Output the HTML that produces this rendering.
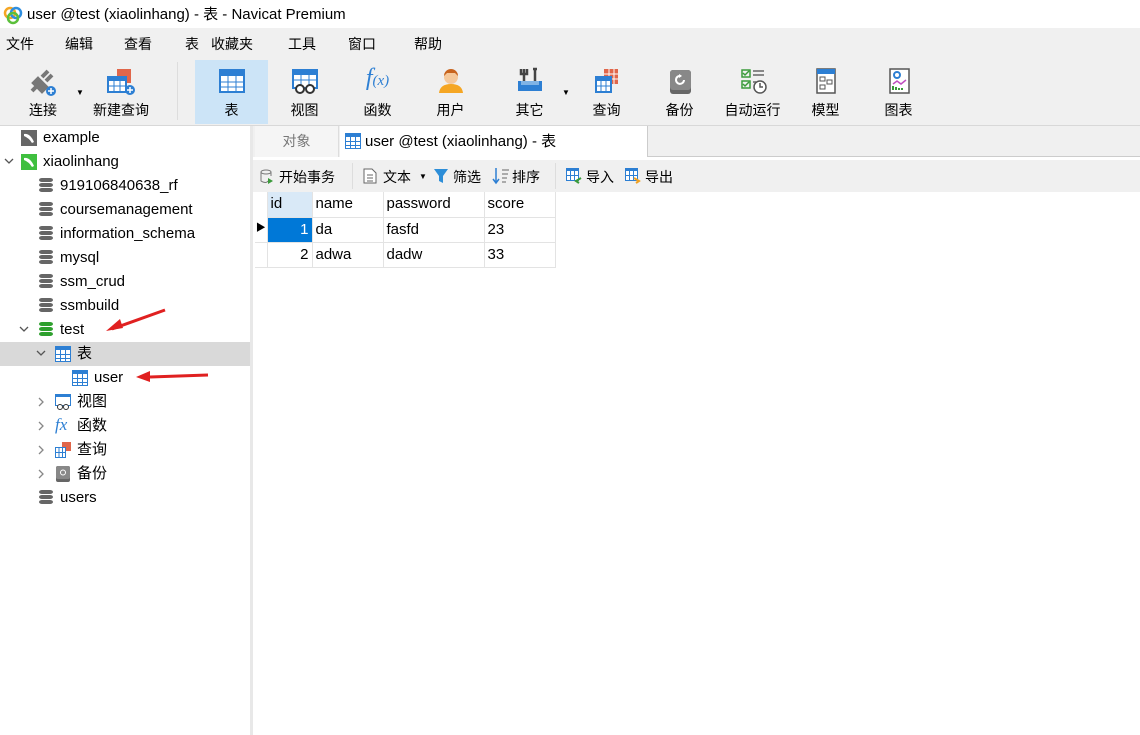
<!DOCTYPE html><html><head><meta charset="utf-8"><style>
*{margin:0;padding:0;box-sizing:border-box}
body{width:1140px;height:735px;overflow:hidden;background:#fff;font-family:"Liberation Sans","Noto Sans CJK SC",sans-serif;color:#000;position:relative}
.a{position:absolute;white-space:nowrap;line-height:18px}
.t{font-size:15px}
.tb{position:absolute;top:60px;height:64px;text-align:center;font-size:14px}
.tb .ic{position:absolute;left:50%;top:7px;transform:translateX(-50%)}
.tb .lb{position:absolute;top:41px;width:100%;text-align:center;line-height:18px}
.db{position:absolute;width:14px;height:16px}
.db i{display:block;height:4px;background:#666;border-radius:3px/2px;margin-bottom:1px}
.grid td{border-right:1px solid #e3e3e3;border-bottom:1px solid #e3e3e3;height:25px;font-size:15px;padding:0 3px;line-height:18px}
.cd{position:absolute}
</style></head><body>
<div class="a" style="left:0;top:0;width:1140px;height:28px;background:#fff"></div>
<svg class="a" style="left:3px;top:5px" width="20" height="20"><circle cx="7" cy="8" r="5" fill="none" stroke="#f5a623" stroke-width="2.5"/><circle cx="13" cy="8" r="5" fill="none" stroke="#2d8ee0" stroke-width="2.5"/><circle cx="10" cy="13" r="5" fill="none" stroke="#5bbf3b" stroke-width="2.5"/></svg>
<div class="a" style="left:27px;top:6px;font-size:15px">user @test (xiaolinhang) - 表 - Navicat Premium</div>
<div class="a" style="left:0;top:28px;width:1140px;height:97px;background:#f0f0f0"></div>
<div class="a" style="top:35px;font-size:14px;left:6px">文件</div>
<div class="a" style="top:35px;font-size:14px;left:65px">编辑</div>
<div class="a" style="top:35px;font-size:14px;left:124px">查看</div>
<div class="a" style="top:35px;font-size:14px;left:185px">表</div>
<div class="a" style="top:35px;font-size:14px;left:211px">收藏夹</div>
<div class="a" style="top:35px;font-size:14px;left:288px">工具</div>
<div class="a" style="top:35px;font-size:14px;left:348px">窗口</div>
<div class="a" style="top:35px;font-size:14px;left:414px">帮助</div>
<div class="a" style="left:177px;top:62px;width:1px;height:58px;background:#ddd"></div>
<div class="a" style="left:195px;top:60px;width:73px;height:64px;background:#cce4f7"></div>
<div class="tb" style="left:18px;width:50px"><svg class="ic" width="30" height="30"><path d="M4 24 L12 16 M10 12 L18 20 L14 24 L6 16Z M14 10 L20 4 M18 14 L24 8" stroke="#777" stroke-width="4" fill="#777"/><circle cx="23" cy="24" r="5" fill="#2d7fd3"/><path d="M20 24h6M23 21v6" stroke="#fff" stroke-width="1.5"/></svg><div class="lb">连接</div></div>
<div class="a" style="left:76px;top:84px;font-size:8px">▼</div>
<div class="tb" style="left:88px;width:66px"><svg class="ic" width="32" height="30"><rect x="12" y="2" width="14" height="14" fill="#e0664a"/><rect x="3" y="10" width="18" height="15" fill="#fff" stroke="#2d7fd3" stroke-width="2"/><rect x="3" y="10" width="18" height="4" fill="#2d7fd3"/><path d="M9 14v11M15 14v11M3 19h18" stroke="#2d7fd3"/><circle cx="25" cy="23" r="5" fill="#2d7fd3"/><path d="M22 23h6M25 20v6" stroke="#fff" stroke-width="1.5"/></svg><div class="lb">新建查询</div></div>
<div class="tb" style="left:195px;width:73px"><svg class="ic" width="28" height="28"><rect x="2" y="3" width="24" height="22" fill="#fff" stroke="#2d7fd3" stroke-width="2"/><rect x="2" y="3" width="24" height="6" fill="#2d7fd3"/><path d="M10 9v16M18 9v16M2 15h24M2 20h24" stroke="#2d7fd3"/></svg><div class="lb">表</div></div>
<div class="tb" style="left:268px;width:73px"><svg class="ic" width="30" height="28"><rect x="3" y="3" width="24" height="18" fill="#fff" stroke="#2d7fd3" stroke-width="2"/><rect x="3" y="3" width="24" height="5" fill="#2d7fd3"/><path d="M11 8v10M19 8v10M3 13h24" stroke="#2d7fd3"/><circle cx="10" cy="22" r="4" fill="#fff" stroke="#333" stroke-width="2"/><circle cx="20" cy="22" r="4" fill="#fff" stroke="#333" stroke-width="2"/></svg><div class="lb">视图</div></div>
<div class="tb" style="left:341px;width:73px"><div class="ic" style="color:#2d7fd3;font-family:'Liberation Serif',serif;font-style:italic;font-size:24px;top:4px;line-height:28px">f<span style="font-size:15px">(x)</span></div><div class="lb">函数</div></div>
<div class="tb" style="left:414px;width:73px"><svg class="ic" width="28" height="28"><circle cx="14" cy="10" r="7" fill="#f5c89a"/><path d="M7 9a7 7 0 0 1 14 0 L18 6 L10 6Z" fill="#c8641e"/><path d="M2 26 Q3 17 14 17 Q25 17 26 26Z" fill="#f5a623"/></svg><div class="lb">用户</div></div>
<div class="tb" style="left:493px;width:73px"><svg class="ic" width="28" height="28"><path d="M8 2v12M5 2v5h6V2M19 2v12M17 2h4" stroke="#444" stroke-width="2.5" fill="none"/><rect x="2" y="14" width="24" height="10" fill="#2d7fd3"/><rect x="5" y="14" width="18" height="4" fill="#7fb3e5"/></svg><div class="lb">其它</div></div>
<div class="a" style="left:562px;top:84px;font-size:8px">▼</div>
<div class="tb" style="left:570px;width:73px"><svg class="ic" width="28" height="28"><rect x="11" y="2" width="14" height="15" fill="#e0664a"/><path d="M11 7h14M11 12h14M16 2v15M21 2v15" stroke="#fff"/><rect x="3" y="10" width="15" height="15" fill="#fff" stroke="#2d7fd3" stroke-width="2"/><rect x="3" y="10" width="15" height="4" fill="#2d7fd3"/><path d="M8 14v11M13 14v11M3 19h15" stroke="#2d7fd3"/></svg><div class="lb">查询</div></div>
<div class="tb" style="left:643px;width:73px"><svg class="ic" width="28" height="28"><rect x="4" y="3" width="21" height="24" rx="3" fill="#666"/><rect x="4" y="3" width="21" height="20" rx="3" fill="#888"/><path d="M18 13a4 4 0 1 1 -3 -4" stroke="#fff" stroke-width="2" fill="none"/><path d="M13 7l3 2-3 2" fill="#fff"/></svg><div class="lb">备份</div></div>
<div class="tb" style="left:716px;width:73px"><svg class="ic" width="30" height="28"><rect x="4" y="3" width="8" height="7" fill="none" stroke="#3a9a3a" stroke-width="1.5"/><rect x="4" y="14" width="8" height="7" fill="none" stroke="#3a9a3a" stroke-width="1.5"/><path d="M5 6l2 2 4-4M5 17l2 2 4-4" stroke="#3a9a3a" stroke-width="1.5" fill="none"/><path d="M15 4h11M15 8h11M15 15h3" stroke="#888" stroke-width="2"/><circle cx="22" cy="20" r="6" fill="#fff" stroke="#555" stroke-width="1.5"/><path d="M22 16v4h3" stroke="#555" stroke-width="1.5" fill="none"/></svg><div class="lb">自动运行</div></div>
<div class="tb" style="left:789px;width:73px"><svg class="ic" width="28" height="28"><rect x="5" y="2" width="18" height="24" fill="#fff" stroke="#555" stroke-width="1.5"/><rect x="5" y="2" width="18" height="5" fill="#2d7fd3"/><rect x="8" y="10" width="5" height="4" fill="none" stroke="#555"/><rect x="15" y="13" width="5" height="4" fill="none" stroke="#555"/><rect x="8" y="18" width="5" height="4" fill="none" stroke="#555"/></svg><div class="lb">模型</div></div>
<div class="tb" style="left:862px;width:73px"><svg class="ic" width="28" height="28"><rect x="5" y="2" width="19" height="24" fill="#fff" stroke="#555" stroke-width="1.5"/><circle cx="12" cy="8" r="3" fill="none" stroke="#2d7fd3" stroke-width="2"/><path d="M8 17l4-3 4 3 5-4" stroke="#c04fc0" fill="none" stroke-width="1.5"/><path d="M8 23v-4M11 23v-3M14 23v-2M17 23v-2" stroke="#3a9a3a" stroke-width="2"/></svg><div class="lb">图表</div></div>
<div class="a" style="left:250px;top:125px;width:3px;height:610px;background:#e8e8e8"></div>
<div class="a" style="left:0;top:125px;width:1140px;height:1px;background:#d8d8d8"></div>
<div class="a" style="left:0;top:342px;width:250px;height:24px;background:#d9d9d9"></div>
<svg class="a" style="left:21px;top:130px" width="16" height="16"><rect width="16" height="16" fill="#666"/><path d="M3 4q6-1 10 8l-2 1q-3-5-8-7z" fill="#fff"/></svg>
<div class="a t" style="left:43px;top:129px">example</div>
<svg class="cd" style="left:4px;top:158px" width="10" height="6"><path d="M1 1l4 4 4-4" stroke="#555" stroke-width="1.3" fill="none"/></svg>
<svg class="a" style="left:21px;top:154px" width="16" height="16"><rect width="16" height="16" fill="#3fbf3f"/><path d="M3 4q6-1 10 8l-2 1q-3-5-8-7z" fill="#fff"/></svg>
<div class="a t" style="left:43px;top:153px">xiaolinhang</div>
<div class="db" style="left:39px;top:178px"><i></i><i></i><i></i></div><div class="a t" style="left:60px;top:177px">919106840638_rf</div>
<div class="db" style="left:39px;top:202px"><i></i><i></i><i></i></div><div class="a t" style="left:60px;top:201px">coursemanagement</div>
<div class="db" style="left:39px;top:226px"><i></i><i></i><i></i></div><div class="a t" style="left:60px;top:225px">information_schema</div>
<div class="db" style="left:39px;top:250px"><i></i><i></i><i></i></div><div class="a t" style="left:60px;top:249px">mysql</div>
<div class="db" style="left:39px;top:274px"><i></i><i></i><i></i></div><div class="a t" style="left:60px;top:273px">ssm_crud</div>
<div class="db" style="left:39px;top:298px"><i></i><i></i><i></i></div><div class="a t" style="left:60px;top:297px">ssmbuild</div>
<svg class="cd" style="left:19px;top:326px" width="10" height="6"><path d="M1 1l4 4 4-4" stroke="#555" stroke-width="1.3" fill="none"/></svg>
<div class="db" style="left:39px;top:322px"><i style="background:#2ea02e"></i><i style="background:#2ea02e"></i><i style="background:#2ea02e"></i></div><div class="a t" style="left:60px;top:321px">test</div>
<svg class="cd" style="left:36px;top:350px" width="10" height="6"><path d="M1 1l4 4 4-4" stroke="#555" stroke-width="1.3" fill="none"/></svg>
<svg class="a" style="left:55px;top:346px" width="16" height="16"><rect x=".5" y=".5" width="15" height="15" fill="#fff" stroke="#2d7fd3"/><rect x="0" y="0" width="16" height="4" fill="#2d7fd3"/><path d="M5.5 4v12M10.5 4v12M0 8.5h16M0 12.5h16" stroke="#2d7fd3"/></svg>
<div class="a t" style="left:77px;top:345px">表</div>
<svg class="a" style="left:72px;top:370px" width="16" height="16"><rect x=".5" y=".5" width="15" height="15" fill="#fff" stroke="#2d7fd3"/><rect x="0" y="0" width="16" height="4" fill="#2d7fd3"/><path d="M5.5 4v12M10.5 4v12M0 8.5h16M0 12.5h16" stroke="#2d7fd3"/></svg>
<div class="a t" style="left:94px;top:369px">user</div>
<svg class="cd" style="left:38px;top:397px" width="6" height="10"><path d="M1 1l4 4-4 4" stroke="#888" stroke-width="1.3" fill="none"/></svg>
<svg class="a" style="left:55px;top:394px" width="16" height="16"><rect x=".5" y=".5" width="15" height="11" fill="#fff" stroke="#2d7fd3"/><rect width="16" height="3" fill="#2d7fd3"/><circle cx="5" cy="13" r="2.5" fill="#fff" stroke="#333"/><circle cx="11" cy="13" r="2.5" fill="#fff" stroke="#333"/></svg>
<div class="a t" style="left:77px;top:393px">视图</div>
<svg class="cd" style="left:38px;top:421px" width="6" height="10"><path d="M1 1l4 4-4 4" stroke="#888" stroke-width="1.3" fill="none"/></svg>
<div class="a" style="left:55px;top:416px;font-family:'Liberation Serif',serif;font-style:italic;color:#2d7fd3;font-size:17px">fx</div>
<div class="a t" style="left:77px;top:417px">函数</div>
<svg class="cd" style="left:38px;top:445px" width="6" height="10"><path d="M1 1l4 4-4 4" stroke="#888" stroke-width="1.3" fill="none"/></svg>
<svg class="a" style="left:55px;top:442px" width="16" height="16"><rect x="7" y="0" width="9" height="9" fill="#e0664a"/><rect x=".5" y="5.5" width="10" height="10" fill="#fff" stroke="#2d7fd3"/><path d="M4 6v10M7.5 6v10M0 10.5h11" stroke="#2d7fd3"/></svg>
<div class="a t" style="left:77px;top:441px">查询</div>
<svg class="cd" style="left:38px;top:469px" width="6" height="10"><path d="M1 1l4 4-4 4" stroke="#888" stroke-width="1.3" fill="none"/></svg>
<svg class="a" style="left:56px;top:466px" width="14" height="16"><rect width="14" height="16" rx="2" fill="#666"/><rect width="14" height="13" rx="2" fill="#888"/><circle cx="7" cy="6.5" r="2.5" fill="none" stroke="#fff"/></svg>
<div class="a t" style="left:77px;top:465px">备份</div>
<div class="db" style="left:39px;top:490px"><i></i><i></i><i></i></div><div class="a t" style="left:60px;top:489px">users</div>
<svg class="a" style="left:100px;top:300px" width="120" height="90"><path d="M65 10L12 29" stroke="#e02020" stroke-width="3"/><path d="M6 31l14-12 3 9z" fill="#e02020"/><path d="M108 75L50 77" stroke="#e02020" stroke-width="3"/><path d="M36 77l14-6v11z" fill="#e02020"/></svg>
<div class="a" style="left:253px;top:126px;width:887px;height:66px;background:#f0f0f0"></div>
<div class="a" style="left:255px;top:126px;width:84px;height:31px;background:#f5f5f5;border-right:1px solid #ddd;color:#777;font-size:14px;text-align:center;line-height:31px">对象</div>
<div class="a" style="left:340px;top:126px;width:308px;height:31px;background:#fff;border-right:1px solid #ccc"></div>
<svg class="a" style="left:345px;top:133px" width="16" height="16"><rect x=".5" y=".5" width="15" height="15" fill="#fff" stroke="#2d7fd3"/><rect width="16" height="4" fill="#2d7fd3"/><path d="M5.5 4v12M10.5 4v12M0 8.5h16M0 12.5h16" stroke="#2d7fd3"/></svg>
<div class="a" style="left:365px;top:133px;font-size:15px">user @test (xiaolinhang) - 表</div>
<div class="a" style="left:648px;top:156px;width:492px;height:1px;background:#ccc"></div>
<div class="a" style="left:253px;top:157px;width:887px;height:3px;background:#fff"></div>
<svg class="a" style="left:260px;top:169px" width="14" height="16"><ellipse cx="6" cy="3" rx="5" ry="2" fill="none" stroke="#777"/><path d="M1 3v9q5 3 7 0M11 3v4" stroke="#777" fill="none"/><path d="M8 9l5 3-5 3z" fill="#3a9a3a"/></svg>
<div class="a" style="left:279px;top:168px;font-size:14px">开始事务</div>
<div class="a" style="left:352px;top:163px;width:1px;height:26px;background:#ddd"></div>
<svg class="a" style="left:363px;top:168px" width="14" height="16"><path d="M1 1h8l4 4v10H1z" fill="#fff" stroke="#666"/><path d="M4 7h6M4 10h6M4 13h6" stroke="#666"/></svg>
<div class="a" style="left:383px;top:168px;font-size:14px">文本</div>
<div class="a" style="left:419px;top:168px;font-size:8px">▼</div>
<svg class="a" style="left:433px;top:168px" width="16" height="16"><path d="M1 1h14l-5 7v7l-4-2V8z" fill="#2d8ed8"/></svg>
<div class="a" style="left:453px;top:168px;font-size:14px">筛选</div>
<svg class="a" style="left:492px;top:167px" width="18" height="18"><path d="M4 1v14M1 12l3 4 3-4" stroke="#2d7fd3" stroke-width="1.5" fill="none"/><path d="M10 3h7M10 7h6M10 11h5M10 15h4" stroke="#666"/></svg>
<div class="a" style="left:512px;top:168px;font-size:14px">排序</div>
<div class="a" style="left:555px;top:163px;width:1px;height:26px;background:#ddd"></div>
<svg class="a" style="left:566px;top:168px" width="16" height="16"><rect x=".5" y=".5" width="12" height="12" fill="#fff" stroke="#2d7fd3"/><rect width="13" height="3" fill="#2d7fd3"/><path d="M4.5 3v10M8.5 3v10M0 7.5h13" stroke="#2d7fd3"/><path d="M15 10l-5 3 3 2" stroke="#3a9a3a" stroke-width="2" fill="none"/></svg>
<div class="a" style="left:586px;top:168px;font-size:14px">导入</div>
<svg class="a" style="left:625px;top:168px" width="16" height="16"><rect x=".5" y=".5" width="12" height="12" fill="#fff" stroke="#2d7fd3"/><rect width="13" height="3" fill="#2d7fd3"/><path d="M4.5 3v10M8.5 3v10M0 7.5h13" stroke="#2d7fd3"/><path d="M9 10l5 3-3 2" stroke="#f0a020" stroke-width="2" fill="none"/></svg>
<div class="a" style="left:645px;top:168px;font-size:14px">导出</div>
<table class="grid a" style="left:255px;top:192px;border-collapse:collapse">
<tr><td style="width:12px;background:#fff;border-bottom:none"></td><td style="width:45px;height:24px;background:#d9e9f7">id</td><td style="width:71px">name</td><td style="width:101px">password</td><td style="width:71px">score</td></tr>
<tr><td style="padding:0;font-size:10px;text-align:center;background:#fff">&#9654;</td><td style="background:#0078d7;color:#fff;text-align:right;height:24px">1</td><td>da</td><td>fasfd</td><td>23</td></tr>
<tr><td style="background:#fff"></td><td style="text-align:right;height:24px">2</td><td>adwa</td><td>dadw</td><td>33</td></tr>
</table>
</body></html>
